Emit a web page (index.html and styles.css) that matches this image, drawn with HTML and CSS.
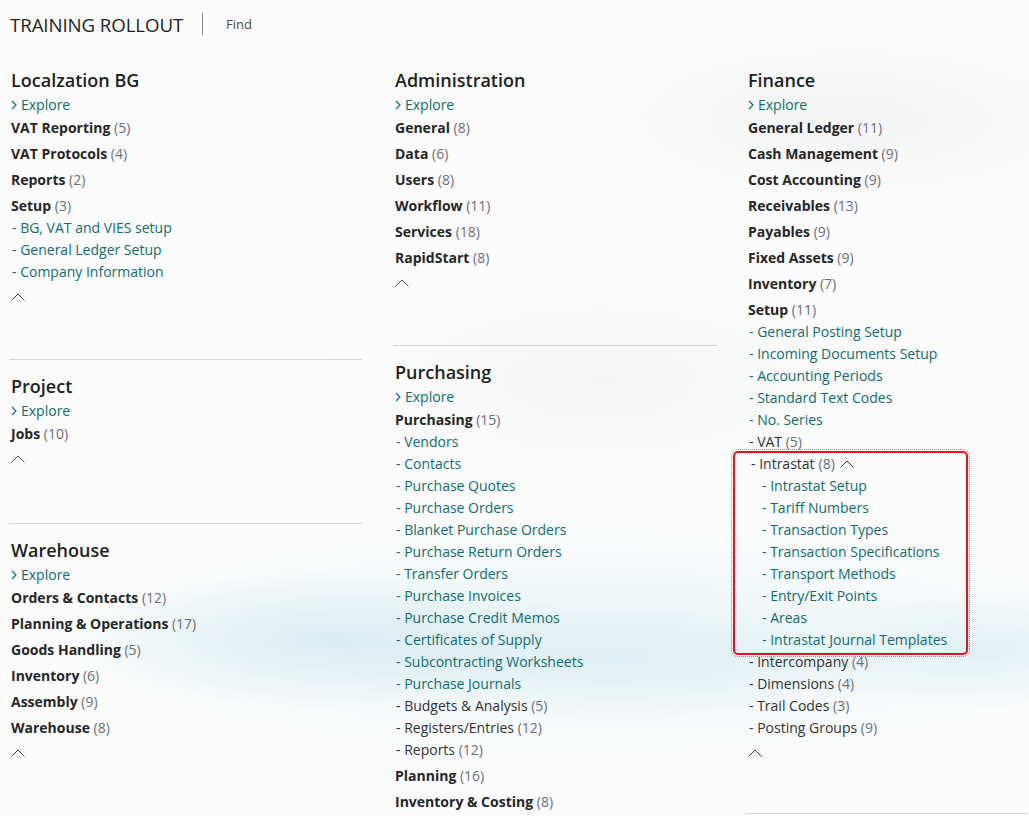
FILE: index.html
```html
<!DOCTYPE html>
<html lang="en">
<head>
<meta charset="utf-8">
<title>Training Rollout</title>
<link rel="stylesheet" href="styles.css">
</head>
<body>
<header class="top">
  <span class="title">TRAINING ROLLOUT</span>
  <span class="sep"></span>
  <span class="find">Find</span>
</header>
<main class="cols">
  <div class="col col1">
    <section class="group">
      <h2>Localzation BG</h2>
      <a class="explore"><svg width="6" height="10" viewBox="0 0 6 10"><polyline points="1,1 5,5 1,9" fill="none" stroke="currentColor" stroke-width="1.2"/></svg>Explore</a>
      <ul class="items">
        <li class="cat"><b>VAT Reporting</b> <span class="cnt">(5)</span></li>
        <li class="cat"><b>VAT Protocols</b> <span class="cnt">(4)</span></li>
        <li class="cat"><b>Reports</b> <span class="cnt">(2)</span></li>
        <li class="cat"><b>Setup</b> <span class="cnt">(3)</span></li>
        <li class="sub link">- BG, VAT and VIES setup</li>
        <li class="sub link">- General Ledger Setup</li>
        <li class="sub link">- Company Information</li>
      </ul>
      <div class="collapse"><svg width="14" height="8" viewBox="0 0 14 8"><polyline points="0.5,7.5 7,1 13.5,7.5" fill="none" stroke="#444" stroke-width="1"/></svg></div>
    </section>
    <section class="group group-project">
      <h2>Project</h2>
      <a class="explore"><svg width="6" height="10" viewBox="0 0 6 10"><polyline points="1,1 5,5 1,9" fill="none" stroke="currentColor" stroke-width="1.2"/></svg>Explore</a>
      <ul class="items">
        <li class="cat"><b>Jobs</b> <span class="cnt">(10)</span></li>
      </ul>
      <div class="collapse"><svg width="14" height="8" viewBox="0 0 14 8"><polyline points="0.5,7.5 7,1 13.5,7.5" fill="none" stroke="#444" stroke-width="1"/></svg></div>
    </section>
    <section class="group">
      <h2>Warehouse</h2>
      <a class="explore"><svg width="6" height="10" viewBox="0 0 6 10"><polyline points="1,1 5,5 1,9" fill="none" stroke="currentColor" stroke-width="1.2"/></svg>Explore</a>
      <ul class="items">
        <li class="cat"><b>Orders &amp; Contacts</b> <span class="cnt">(12)</span></li>
        <li class="cat"><b>Planning &amp; Operations</b> <span class="cnt">(17)</span></li>
        <li class="cat"><b>Goods Handling</b> <span class="cnt">(5)</span></li>
        <li class="cat"><b>Inventory</b> <span class="cnt">(6)</span></li>
        <li class="cat"><b>Assembly</b> <span class="cnt">(9)</span></li>
        <li class="cat"><b>Warehouse</b> <span class="cnt">(8)</span></li>
      </ul>
      <div class="collapse"><svg width="14" height="8" viewBox="0 0 14 8"><polyline points="0.5,7.5 7,1 13.5,7.5" fill="none" stroke="#444" stroke-width="1"/></svg></div>
    </section>
  </div>

  <div class="col col2">
    <section class="group">
      <h2>Administration</h2>
      <a class="explore"><svg width="6" height="10" viewBox="0 0 6 10"><polyline points="1,1 5,5 1,9" fill="none" stroke="currentColor" stroke-width="1.2"/></svg>Explore</a>
      <ul class="items">
        <li class="cat"><b>General</b> <span class="cnt">(8)</span></li>
        <li class="cat"><b>Data</b> <span class="cnt">(6)</span></li>
        <li class="cat"><b>Users</b> <span class="cnt">(8)</span></li>
        <li class="cat"><b>Workflow</b> <span class="cnt">(11)</span></li>
        <li class="cat"><b>Services</b> <span class="cnt">(18)</span></li>
        <li class="cat"><b>RapidStart</b> <span class="cnt">(8)</span></li>
      </ul>
      <div class="collapse"><svg width="14" height="8" viewBox="0 0 14 8"><polyline points="0.5,7.5 7,1 13.5,7.5" fill="none" stroke="#444" stroke-width="1"/></svg></div>
    </section>
    <section class="group">
      <h2>Purchasing</h2>
      <a class="explore"><svg width="6" height="10" viewBox="0 0 6 10"><polyline points="1,1 5,5 1,9" fill="none" stroke="currentColor" stroke-width="1.2"/></svg>Explore</a>
      <ul class="items">
        <li class="cat"><b>Purchasing</b> <span class="cnt">(15)</span></li>
        <li class="sub link">- Vendors</li>
        <li class="sub link">- Contacts</li>
        <li class="sub link">- Purchase Quotes</li>
        <li class="sub link">- Purchase Orders</li>
        <li class="sub link">- Blanket Purchase Orders</li>
        <li class="sub link">- Purchase Return Orders</li>
        <li class="sub link">- Transfer Orders</li>
        <li class="sub link">- Purchase Invoices</li>
        <li class="sub link">- Purchase Credit Memos</li>
        <li class="sub link">- Certificates of Supply</li>
        <li class="sub link">- Subcontracting Worksheets</li>
        <li class="sub link">- Purchase Journals</li>
        <li class="sub">- Budgets &amp; Analysis <span class="cnt">(5)</span></li>
        <li class="sub">- Registers/Entries <span class="cnt">(12)</span></li>
        <li class="sub">- Reports <span class="cnt">(12)</span></li>
        <li class="cat"><b>Planning</b> <span class="cnt">(16)</span></li>
        <li class="cat"><b>Inventory &amp; Costing</b> <span class="cnt">(8)</span></li>
      </ul>
    </section>
  </div>

  <div class="col col3">
    <section class="group">
      <h2>Finance</h2>
      <a class="explore"><svg width="6" height="10" viewBox="0 0 6 10"><polyline points="1,1 5,5 1,9" fill="none" stroke="currentColor" stroke-width="1.2"/></svg>Explore</a>
      <ul class="items">
        <li class="cat"><b>General Ledger</b> <span class="cnt">(11)</span></li>
        <li class="cat"><b>Cash Management</b> <span class="cnt">(9)</span></li>
        <li class="cat"><b>Cost Accounting</b> <span class="cnt">(9)</span></li>
        <li class="cat"><b>Receivables</b> <span class="cnt">(13)</span></li>
        <li class="cat"><b>Payables</b> <span class="cnt">(9)</span></li>
        <li class="cat"><b>Fixed Assets</b> <span class="cnt">(9)</span></li>
        <li class="cat"><b>Inventory</b> <span class="cnt">(7)</span></li>
        <li class="cat"><b>Setup</b> <span class="cnt">(11)</span></li>
        <li class="sub link">- General Posting Setup</li>
        <li class="sub link">- Incoming Documents Setup</li>
        <li class="sub link">- Accounting Periods</li>
        <li class="sub link">- Standard Text Codes</li>
        <li class="sub link">- No. Series</li>
        <li class="sub">- VAT <span class="cnt">(5)</span></li>
        <li class="highlight">
          <div class="sub">- Intrastat <span class="cnt">(8)</span> <svg class="inline-up" width="14" height="8" viewBox="0 0 14 8"><polyline points="0.5,7.5 7,1 13.5,7.5" fill="none" stroke="#444" stroke-width="1"/></svg></div>
          <ul class="nested">
            <li class="sub link">- Intrastat Setup</li>
            <li class="sub link">- Tariff Numbers</li>
            <li class="sub link">- Transaction Types</li>
            <li class="sub link">- Transaction Specifications</li>
            <li class="sub link">- Transport Methods</li>
            <li class="sub link">- Entry/Exit Points</li>
            <li class="sub link">- Areas</li>
            <li class="sub link">- Intrastat Journal Templates</li>
          </ul>
        </li>
        <li class="sub">- Intercompany <span class="cnt">(4)</span></li>
        <li class="sub">- Dimensions <span class="cnt">(4)</span></li>
        <li class="sub">- Trail Codes <span class="cnt">(3)</span></li>
        <li class="sub">- Posting Groups <span class="cnt">(9)</span></li>
      </ul>
      <div class="collapse"><svg width="14" height="8" viewBox="0 0 14 8"><polyline points="0.5,7.5 7,1 13.5,7.5" fill="none" stroke="#444" stroke-width="1"/></svg></div>
    </section>
    <section class="group"></section>
  </div>
</main>
</body>
</html>
```
FILE: styles.css
```css
* { box-sizing: border-box; }
html, body {
  margin: 0;
  padding: 0;
  height: 816px;
  overflow: hidden;
}
body {
  font-family: "Open Sans", "Noto Sans", sans-serif;
  color: #212121;
  background-color: #fcfcfc;
  background-image:
    radial-gradient(ellipse 260px 70px at 330px 640px, rgba(208,231,237,0.7), rgba(208,231,237,0) 100%),
    radial-gradient(ellipse 300px 60px at 620px 660px, rgba(212,234,239,0.6), rgba(212,234,239,0) 100%),
    radial-gradient(ellipse 200px 60px at 980px 650px, rgba(212,234,239,0.6), rgba(212,234,239,0) 100%),
    radial-gradient(ellipse 560px 120px at 600px 640px, rgba(228,242,245,0.8), rgba(228,242,245,0) 100%),
    radial-gradient(ellipse 300px 120px at 600px 380px, rgba(244,245,246,0.9), rgba(244,245,246,0) 100%),
    radial-gradient(ellipse 300px 100px at 850px 120px, rgba(242,243,244,0.9), rgba(242,243,244,0) 100%);
}

.top {
  height: 48px;
  display: flex;
  align-items: center;
  padding-left: 10px;
}
.title {
  font-size: 18.7px;
  font-weight: 400;
  color: #201f1e;
  letter-spacing: -0.1px;
}
.sep {
  width: 1px;
  height: 22px;
  background: #8a8886;
  margin: 0 23px 0 19px;
}
.find {
  font-size: 13px;
  color: #4a4a4a;
}

.cols {
  display: flex;
  align-items: flex-start;
  padding: 20px 0 0 9px;
  gap: 31px;
}
.col1 { width: 353px; flex: none; }
.col2 { width: 324px; flex: none; }
.col3 { flex: 1; margin-left: -2px; margin-right: 1px; }

.group {
  border-bottom: 1px solid #d5d5d5;
  padding: 0 0 51px 0;
  margin-bottom: 14px;
}
.col1 .group:last-child,
.col2 .group:last-child { border-bottom: 0; }
.col3 .group:first-child { padding-bottom: 49px; }
.group-project { padding-bottom: 53px; }

.group h2 {
  margin: 0 0 3px 0;
  font-size: 18px;
  font-weight: 600;
  line-height: 24px;
  padding-left: 2px;
  color: #201f1e;
}

.explore {
  display: flex;
  align-items: center;
  height: 18px;
  font-size: 14px;
  color: #0e6d6c;
  padding-left: 2px;
}
.explore svg { margin-right: 4px; margin-top: 1px; }

.items, .nested {
  list-style: none;
  margin: 0;
  padding: 0;
}
.items li { font-size: 14px; }
.cat {
  margin-top: 4px;
  line-height: 22px;
  padding-left: 2px;
  color: #262626;
}
.cat b { font-weight: 700; }
.cnt { color: #6d6d78; }

.sub {
  line-height: 22px;
  padding-left: 3px;
  color: #323130;
}
.sub.link { color: #0e6d6c; }

.nested .sub { padding-left: 14px; }

.highlight {
  margin: -2px 0 -4px -13px;
  width: 235px;
  padding: 0 0 2px 13px;
  border: 2px solid #e8101f;
  border-radius: 5px;
  outline: 1px dotted #8a8a8a;
  outline-offset: 1px;
}
.highlight > .sub { display: flex; align-items: center; }
.highlight > .sub .cnt { margin-left: 4px; }
.inline-up { margin-left: 5px; }

.collapse {
  margin-top: 3px;
  height: 22px;
  display: flex;
  align-items: center;
  padding-left: 2px;
}
```
